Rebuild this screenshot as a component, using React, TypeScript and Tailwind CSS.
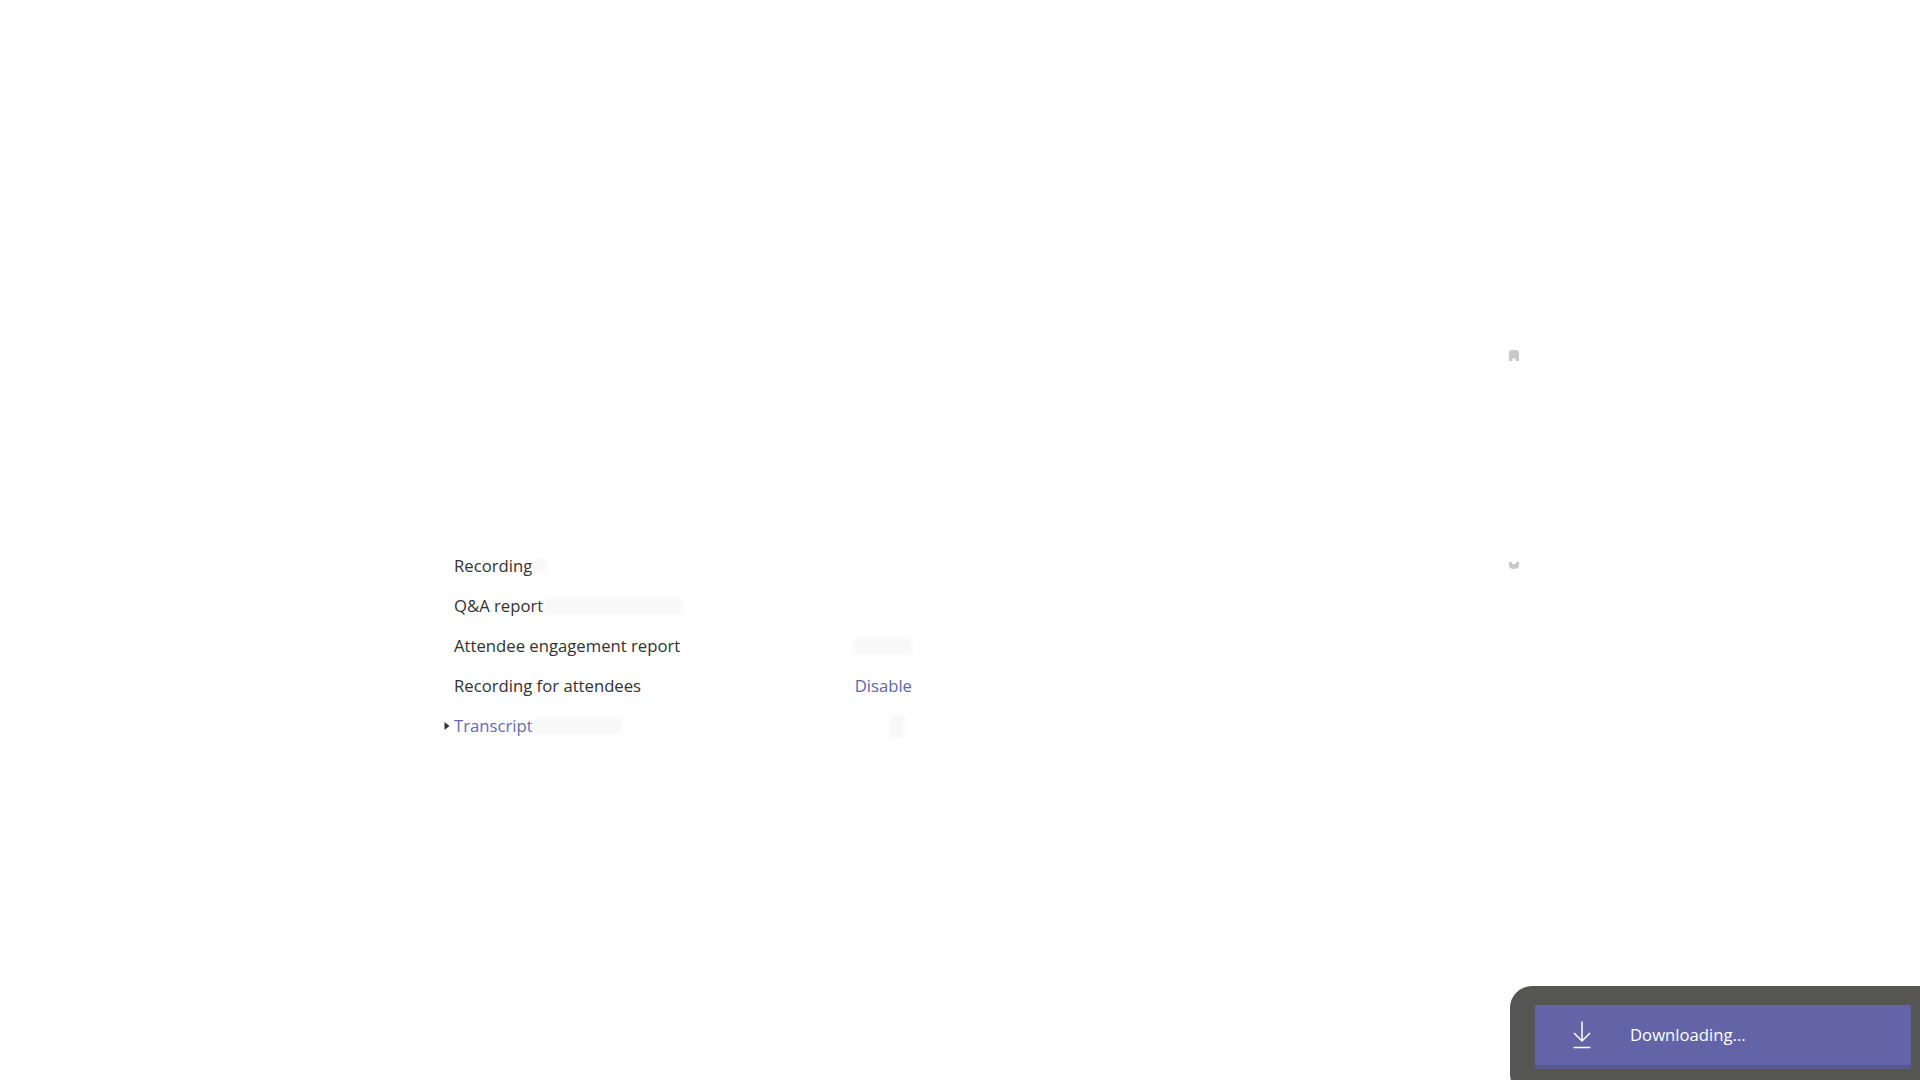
import React from "react";

function Smudge({ className }: { className: string }) {
  return <div className={"rounded-[3px] bg-[#f8f8f8] blur-[2px] " + className} />;
}

function Row({ label, purple, arrow, action, children }: { label: string; purple?: boolean; arrow?: boolean; action?: React.ReactNode; children?: React.ReactNode }) {
  return (
    <div className="relative flex h-[40px] w-[458px] items-center justify-between">
      <div className="flex items-center">
        <span className={purple ? "text-[#6668b8]" : "text-[#333231]"}>{label}</span>
        {children}
      </div>
      {action}
      {arrow && (
        <svg className="absolute left-[-10px] top-[15px]" width="6" height="10" viewBox="0 0 6 10">
          <path d="M0.5 1 L5.5 5 L0.5 9 Z" fill="#333" />
        </svg>
      )}
    </div>
  );
}

export default function App() {
  return (
    <div className="relative h-[1080px] w-full overflow-hidden bg-white font-['Open_Sans','Noto_Sans',sans-serif] text-[16.7px]">
      <div className="flex pl-[454px] pt-[349px]">
        <div className="w-[1055px] pt-[197px]">
          <Row label="Recording">
            <Smudge className="ml-[1px] h-[16px] w-[14px]" />
          </Row>
          <Row label="Q&A report">
            <Smudge className="ml-[1px] h-[18px] w-[138px]" />
          </Row>
          <Row
            label="Attendee engagement report"
            action={<Smudge className="h-[18px] w-[58px]" />}
          />
          <Row
            label="Recording for attendees"
            action={<span className="text-[#6264a7]">Disable</span>}
          />
          <Row
            label="Transcript"
            purple
            arrow
            action={<Smudge className="mr-[7px] h-[24px] w-[16px]" />}
          >
            <Smudge className="h-[18px] w-[89px]" />
          </Row>
        </div>
        <div className="flex h-[221px] w-[10px] flex-col justify-between">
          <svg width="10" height="12" viewBox="0 0 10 12">
            <path d="M0 12 V4 Q0 1 3 1 H7 Q10 1 10 4 V12 H6.5 V9.5 H3.5 V12 Z" fill="#c8c8c8" />
          </svg>
          <svg width="10" height="8" viewBox="0 0 10 8">
            <path d="M0 0 H3 V2 H7 V0 H10 V3 Q10 7 5 7 Q0 7 0 3 Z" fill="#c8c8c8" />
          </svg>
        </div>
      </div>

      <div className="absolute left-[1510px] top-[986px] h-[110px] w-[430px] rounded-[22px] bg-[#555554]">
        <div className="ml-[25px] mt-[19px] flex h-[64px] w-[376px] items-center border-b-[4px] border-[#55578f] bg-[#6264a7] text-white">
          <svg className="ml-[37px]" width="20" height="28" viewBox="0 0 20 28" fill="none" stroke="white" strokeWidth="1.5">
            <path d="M10 0.5 V19.5 M2 12 L10 20 L18 12" />
            <path d="M1.5 26.5 H18.5" />
          </svg>
          <span className="ml-[38px]">Downloading...</span>
        </div>
      </div>
    </div>
  );
}
